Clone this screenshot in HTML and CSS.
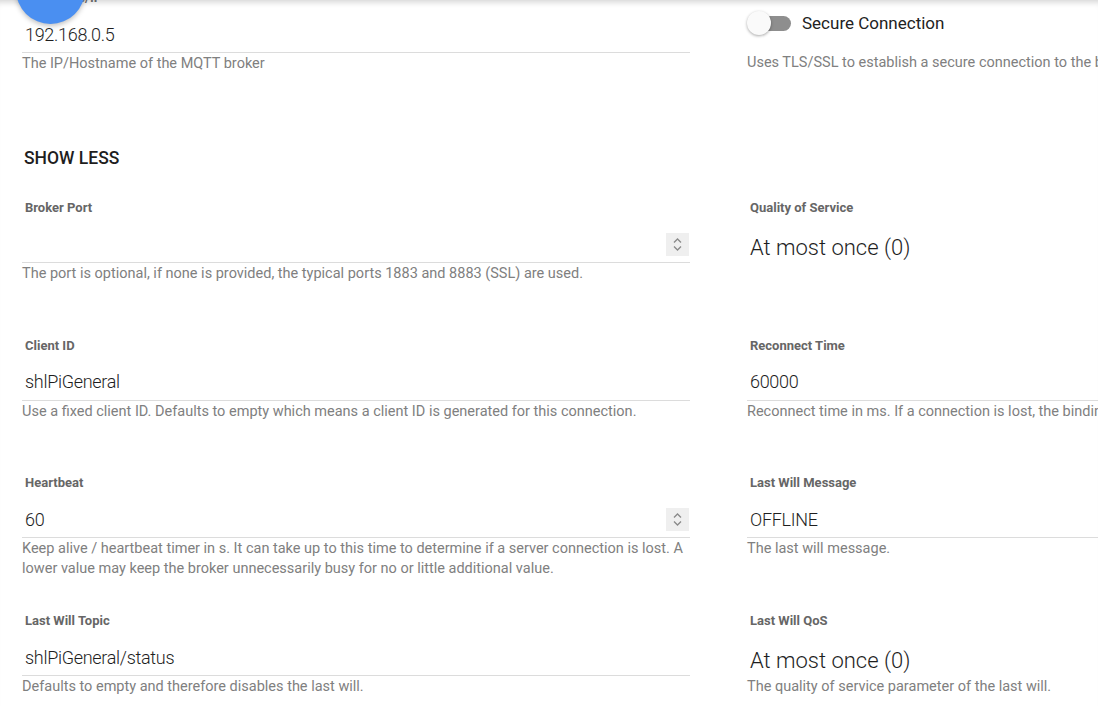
FILE: index.html
```html
<!DOCTYPE html>
<html lang="en">
<head>
    <meta charset="UTF-8">
    <title>MQTT Broker</title>
    <link rel="stylesheet" href="styles.css">
</head>
<body>

    <div class="fab"></div>

    <main class="form">
        <div class="grid first">
            <div class="field">
                <div class="label">Hostname/IP</div>
                <div class="input"><span class="value">192.168.0.5</span></div>
                <div class="help">The IP/Hostname of the MQTT broker</div>
            </div>
            <div class="field">
                <div class="switch">
                    <span class="track"><span class="knob"></span></span>
                    <span class="switch-text">Secure Connection</span>
                </div>
                <div class="help switch-help">Uses TLS/SSL to establish a secure connection to the broker.</div>
            </div>
        </div>

        <div class="more">SHOW LESS</div>

        <div class="grid">
            <div class="field">
                <div class="label">Broker Port</div>
                <div class="input"><span class="value"></span><span class="spin"><svg width="11" height="15" viewBox="0 0 11 15"><path d="M2 5.5 L5.5 2 L9 5.5 M2 9.5 L5.5 13 L9 9.5" fill="none" stroke="#8a8a8a" stroke-width="1.3"/></svg></span></div>
                <div class="help">The port is optional, if none is provided, the typical ports 1883 and 8883 (SSL) are used.</div>
            </div>
            <div class="field">
                <div class="label">Quality of Service</div>
                <div class="select">At most once (0)</div>
            </div>

            <div class="field">
                <div class="label">Client ID</div>
                <div class="input"><span class="value">shlPiGeneral</span></div>
                <div class="help">Use a fixed client ID. Defaults to empty which means a client ID is generated for this connection.</div>
            </div>
            <div class="field">
                <div class="label">Reconnect Time</div>
                <div class="input"><span class="value">60000</span></div>
                <div class="help">Reconnect time in ms. If a connection is lost, the binding will wait this time before it tries to reconnect.</div>
            </div>

            <div class="field">
                <div class="label">Heartbeat</div>
                <div class="input"><span class="value">60</span><span class="spin"><svg width="11" height="15" viewBox="0 0 11 15"><path d="M2 5.5 L5.5 2 L9 5.5 M2 9.5 L5.5 13 L9 9.5" fill="none" stroke="#8a8a8a" stroke-width="1.3"/></svg></span></div>
                <div class="help">Keep alive / heartbeat timer in s. It can take up to this time to determine if a server connection is lost. A lower value may keep the broker unnecessarily busy for no or little additional value.</div>
            </div>
            <div class="field">
                <div class="label">Last Will Message</div>
                <div class="input"><span class="value">OFFLINE</span></div>
                <div class="help">The last will message.</div>
            </div>

            <div class="field">
                <div class="label">Last Will Topic</div>
                <div class="input"><span class="value">shlPiGeneral/status</span></div>
                <div class="help">Defaults to empty and therefore disables the last will.</div>
            </div>
            <div class="field">
                <div class="label">Last Will QoS</div>
                <div class="select">At most once (0)</div>
                <div class="help">The quality of service parameter of the last will.</div>
            </div>
        </div>
    </main>

</body>
</html>
```

FILE: styles.css
```css
body{
    margin: 0;
    height: 706px;
    overflow: hidden;
    background: #fff;
    font-family: Roboto, "Liberation Sans", sans-serif;
    box-shadow: inset 0 7px 6px -5px rgba(0,0,0,0.18);
}
.fab{
    position: absolute;
    left: 16px;
    top: -45px;
    width: 69px;
    height: 69px;
    border-radius: 50%;
    background: #4a8ff1;
    box-shadow: 0 2px 5px rgba(0,0,0,0.25);
    z-index: 2;
}
.form{
    margin-top: -10px;
    padding-left: 22px;
}
.grid{
    display: grid;
    grid-template-columns: 668px 668px;
    column-gap: 57px;
    grid-auto-rows: 137.7px;
}
.grid.first{
    grid-auto-rows: auto;
}
.label{
    height: 16px;
    padding-left: 3px;
    font-size: 13px;
    line-height: 16px;
    font-weight: 700;
    color: #666;
}
.input{
    display: flex;
    align-items: center;
    justify-content: space-between;
    height: 24px;
    margin-top: 16px;
    padding: 0 0 6px 3px;
    border-bottom: 1px solid #dcdcdc;
}
.value{
    font-size: 18px;
    font-weight: 300;
    color: #1e1e1e;
    letter-spacing: -0.3px;
}
.spin{
    display: flex;
    align-items: center;
    justify-content: center;
    width: 23px;
    height: 23px;
    margin-right: 1px;
    background: #efefef;
}
.select{
    height: 30px;
    margin-top: 17px;
    padding-left: 3px;
    font-size: 22px;
    line-height: 30px;
    font-weight: 300;
    color: #1e1e1e;
}
.help{
    margin-top: 1px;
    font-size: 14.5px;
    line-height: 20px;
    color: #808080;
}
.switch{
    display: flex;
    align-items: center;
    gap: 11px;
    height: 30px;
    margin-top: 18px;
}
.track{
    position: relative;
    width: 41px;
    height: 15px;
    margin-left: 3px;
    border-radius: 8px;
    background: #8e8e8e;
}
.knob{
    position: absolute;
    left: -3px;
    top: -4.5px;
    width: 24px;
    height: 24px;
    border-radius: 50%;
    background: #fafafa;
    box-shadow: 0 1px 3px rgba(0,0,0,0.35);
}
.switch-text{
    font-size: 17px;
    color: #222;
}
.switch-help{
    margin-top: 15px;
}
.more{
    margin: 72px 0 30px 2px;
    font-size: 17.5px;
    line-height: 24px;
    font-weight: 500;
    color: #1e1e1e;
}
```
